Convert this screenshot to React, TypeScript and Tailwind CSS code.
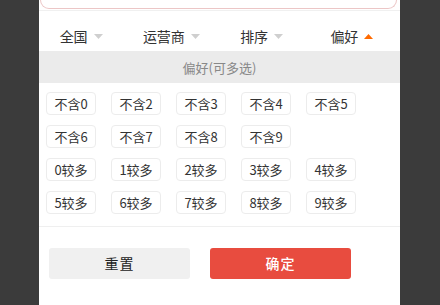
import React from "react";

const tabs = [
  { label: "全国", active: false },
  { label: "运营商", active: false },
  { label: "排序", active: false },
  { label: "偏好", active: true },
];

const options = [
  "不含0", "不含2", "不含3", "不含4", "不含5",
  "不含6", "不含7", "不含8", "不含9",
  "0较多", "1较多", "2较多", "3较多", "4较多",
  "5较多", "6较多", "7较多", "8较多", "9较多",
];

function Caret({ up }: { up: boolean }) {
  return (
    <svg width="9" height="5" viewBox="0 0 9 5" className="ml-[6px]">
      {up ? (
        <path d="M0 5 L4.5 0 L9 5 Z" fill="#ff6a00" />
      ) : (
        <path d="M0 0 L9 0 L4.5 5 Z" fill="#cfcfcf" />
      )}
    </svg>
  );
}

export default function App() {
  const rows = [options.slice(0, 5), options.slice(5, 9), options.slice(9, 14), options.slice(14)];

  return (
    <div
      className="w-[440px] h-[305px] bg-[#3b3b3b] overflow-hidden"
      style={{ fontFamily: '"Noto Sans CJK SC", "Noto Sans", sans-serif' }}
    >
      <div className="ml-[39px] w-[361px] h-full bg-white flex flex-col">
        {/* search box remnant */}
        <div className="h-[11px] border-b border-[#f0f0f0] px-[1px]">
          <div className="h-[9px] w-[357px] border border-t-0 border-[#ecc6c6] rounded-b-[14px]" />
        </div>

        {/* tabs */}
        <div className="h-[40px] pt-[10px] -ml-[3px] mr-[3px] flex items-center">
          {tabs.map((t) => (
            <div key={t.label} className="flex-1 flex items-center justify-center">
              <span className="text-[14px] text-[#333] leading-none">{t.label}</span>
              <Caret up={t.active} />
            </div>
          ))}
        </div>

        {/* header */}
        <div className="h-[32px] pt-[2px] bg-[#ebebeb] flex items-center justify-center text-[13px] text-[#888]">
          偏好(可多选)
        </div>

        {/* chips */}
        <div className="pt-[9px] pb-[12px] pl-[7px] flex flex-col gap-y-[10px] border-b border-[#efefef]">
          {rows.map((r, i) => (
            <div key={i} className="flex gap-x-[15px]">
              {r.map((o) => (
                <div
                  key={o}
                  className="w-[50px] h-[23px] border border-[#ececec] rounded-[4px] flex items-center justify-center text-[13px] text-[#333]"
                >
                  {o}
                </div>
              ))}
            </div>
          ))}
        </div>

        {/* buttons */}
        <div className="pt-[21px] pl-[10px] flex gap-[20px]">
          <button className="w-[141px] h-[31px] bg-[#f0f0f0] rounded-[3px] text-[14px] text-[#222] tracking-[1px]">
            重置
          </button>
          <button className="w-[141px] h-[31px] bg-[#e84c3f] rounded-[3px] text-[14px] font-medium text-white tracking-[1px]">
            确定
          </button>
        </div>
      </div>
    </div>
  );
}
